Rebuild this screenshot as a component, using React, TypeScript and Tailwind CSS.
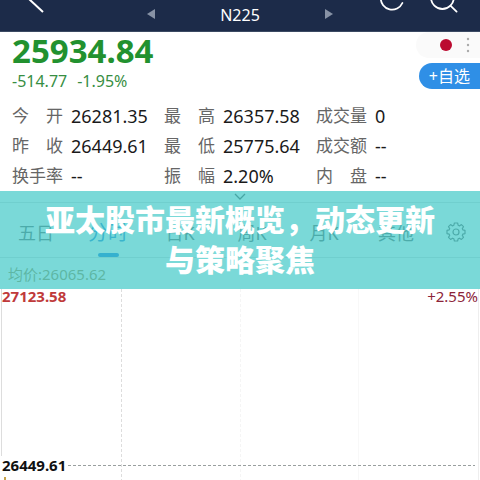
const stats = [
  { label: '今开', value: '26281.35' },
  { label: '最高', value: '26357.58' },
  { label: '成交量', value: '0' },
  { label: '昨收', value: '26449.61' },
  { label: '最低', value: '25775.64' },
  { label: '成交额', value: '--' },
  { label: '换手率', value: '--' },
  { label: '振幅', value: '2.20%' },
  { label: '内盘', value: '--' },
];

const tabs = ['五日', '分时', '日K', '周K', '月K', '其他'];

function Header() {
  return (
    <header className="grid h-8 grid-cols-[1fr_188px_1fr] items-start bg-[#1c2b49] border-b border-[#3b4a63] text-white">
      <button aria-label="返回" className="ml-6 w-6">
        <svg viewBox="0 0 24 16" className="block h-4 w-6" fill="none" stroke="currentColor" strokeWidth="2">
          <path d="M5 -1 L19 12" />
        </svg>
      </button>

      <div className="flex h-7 items-center justify-between">
        <button aria-label="上一个" className="text-[#8792a5]">
          <svg viewBox="0 0 9 10" className="block h-[10px] w-[9px]" fill="currentColor">
            <path d="M9 0 V10 L1 5 Z" />
          </svg>
        </button>
        <h1 className="pt-[2px] text-base leading-7">N225</h1>
        <button aria-label="下一个" className="text-[#8792a5]">
          <svg viewBox="0 0 9 10" className="block h-[10px] w-[9px]" fill="currentColor">
            <path d="M0 0 V10 L8 5 Z" />
          </svg>
        </button>
      </div>

      <div className="flex justify-end gap-6 pr-[22px]">
        <button aria-label="刷新">
          <svg viewBox="0 0 28 16" className="block h-4 w-7" fill="none" stroke="currentColor" strokeWidth="1.8" strokeLinecap="round">
            <path d="M2.8 -2 A11.3 11.3 0 0 0 24.4 3" />
          </svg>
        </button>
        <button aria-label="搜索">
          <svg viewBox="0 0 28 16" className="block h-4 w-7" fill="none" stroke="currentColor" strokeWidth="1.8" strokeLinecap="round">
            <circle cx="12.4" cy="-2.4" r="11.4" />
            <path d="M20.4 5.6 L26.6 11.6" />
          </svg>
        </button>
      </div>
    </header>
  );
}

function Quote() {
  return (
    <section className="flex justify-between">
      <div className="pl-3 text-[#22912f]">
        <p className="text-[33px] leading-[38px] font-bold">25934.84</p>
        <p className="flex gap-[10px] text-base leading-[22px] text-[#378e43]">
          <span>-514.77</span>
          <span>-1.95%</span>
        </p>
      </div>
      <div className="flex flex-col items-end">
        <div className="flex h-[26px] items-center gap-3 rounded-l-full bg-[#fafafa] pr-2 pl-6">
          <span className="size-3 rounded-full bg-[#bb0a30]" />
          <button aria-label="更多" className="text-[#aaaaaa]">
            <svg viewBox="0 0 8 16" className="block h-4 w-2" fill="currentColor">
              <circle cx="4" cy="2" r="1.2" />
              <circle cx="4" cy="8" r="1.2" />
              <circle cx="4" cy="14" r="1.2" />
            </svg>
          </button>
        </div>
        <button className="mt-[5px] h-[26px] rounded-l-full bg-[#2f8fe6] px-[10px] text-base leading-[26px] text-white">
          +自选
        </button>
      </div>
    </section>
  );
}

function Stats() {
  return (
    <dl className="grid grid-cols-3 pt-[9px] pr-3 pl-3">
      {stats.map((item) => (
        <div key={item.label} className="flex h-[30px] items-center gap-2">
          <dt className="flex w-[51px] justify-between text-[17px] text-[#666666]">
            {item.label.split('').map((char) => (
              <span key={char}>{char}</span>
            ))}
          </dt>
          <dd className="text-[18px] text-[#1a1a1a]">{item.value}</dd>
        </div>
      ))}
    </dl>
  );
}

function GearIcon() {
  return (
    <svg viewBox="0 0 20 20" className="size-5" fill="none" stroke="currentColor" strokeWidth="1.2" strokeLinejoin="round">
      <path d="M8.4 1 H11.6 L12.2 3.3 L13.5 3.9 L15.4 2.6 L17.5 4.7 L16.3 6.6 L16.8 7.9 L19 8.4 V11.6 L16.8 12.1 L16.3 13.4 L17.5 15.3 L15.4 17.4 L13.5 16.2 L12.2 16.7 L11.6 19 H8.4 L7.8 16.7 L6.5 16.2 L4.6 17.4 L2.5 15.3 L3.7 13.4 L3.2 12.1 L1 11.6 V8.4 L3.2 7.9 L3.7 6.6 L2.5 4.7 L4.6 2.6 L6.5 3.9 L7.8 3.3 Z" />
      <circle cx="10" cy="10" r="3" />
    </svg>
  );
}

function Period() {
  return (
    <section className="relative">
      <div className="flex h-3 justify-center border-b border-[#dddddd]">
        <svg viewBox="0 0 12 8" className="mt-[2px] h-2 w-3" fill="none" stroke="#555555" strokeWidth="1.3">
          <path d="M1 1 L6 6 L11 1" />
        </svg>
      </div>
      <nav className="flex h-[55px] border-b border-[#dddddd]">
        {tabs.map((tab) => {
          const active = tab === '分时';
          return (
            <button
              key={tab}
              className={`flex flex-[3] flex-col items-center justify-end ${
                active ? 'text-xl text-[#2b86d8]' : 'text-lg text-[#666666]'
              }`}
            >
              <span className="leading-8">{tab}</span>
              <span className={`mt-1 h-1 w-[21px] rounded-full ${active ? 'bg-[#1a7ae0]' : ''}`} />
            </button>
          );
        })}
        <button aria-label="设置" className="flex flex-[2] items-center justify-center pt-1 text-[#666666]">
          <GearIcon />
        </button>
      </nav>
      <p className="h-[26px] pt-1 pl-2 text-[15px] leading-6 text-[#a08a50]">均价:26065.62</p>

      {/* Headline banner */}
      <div className="absolute inset-x-0 top-0 flex h-[98px] items-center justify-center bg-[#41c9c7]/70">
        <h2 className="w-[390px] text-center text-[30px] leading-10 font-black text-white">
          亚太股市最新概览，动态更新与策略聚焦
        </h2>
      </div>
    </section>
  );
}

function Chart() {
  return (
    <section className="relative flex flex-1 flex-col">
      <svg className="absolute inset-0 h-full w-full" fill="none" shapeRendering="crispEdges">
        <line x1="1.5" y1="5" x2="1.5" y2="172" stroke="#dddddd" />
        <line x1="25.3%" y1="5" x2="25.3%" y2="100%" stroke="#dddddd" strokeDasharray="3 2" />
        <line x1="50%" y1="5" x2="50%" y2="100%" stroke="#f5f5f5" strokeDasharray="3 2" />
        <line x1="74.7%" y1="5" x2="74.7%" y2="100%" stroke="#f8f8f8" />
        <line x1="99.6%" y1="5" x2="99.6%" y2="100%" stroke="#eeeeee" />
        <line x1="68" y1="181.5" x2="99%" y2="181.5" stroke="#999f9f" strokeDasharray="3 2" />
        <line x1="5" y1="193" x2="5" y2="100%" stroke="#c8a24a" strokeWidth="2" />
      </svg>
      <div className="flex justify-between px-[2px] text-[15px] leading-6">
        <span className="font-bold text-[#c03a3a]">27123.58</span>
        <span className="text-[#8c2438]">+2.55%</span>
      </div>
      <p className="mt-[147px] px-[2px] text-[15px] leading-5 font-bold text-[#111111]">26449.61</p>
    </section>
  );
}

export default function App() {
  return (
    <main className="flex min-h-screen flex-col overflow-hidden bg-white font-['Noto_Sans','Noto_Sans_CJK_SC',sans-serif]">
      <Header />
      <Quote />
      <Stats />
      <Period />
      <Chart />
    </main>
  );
}
